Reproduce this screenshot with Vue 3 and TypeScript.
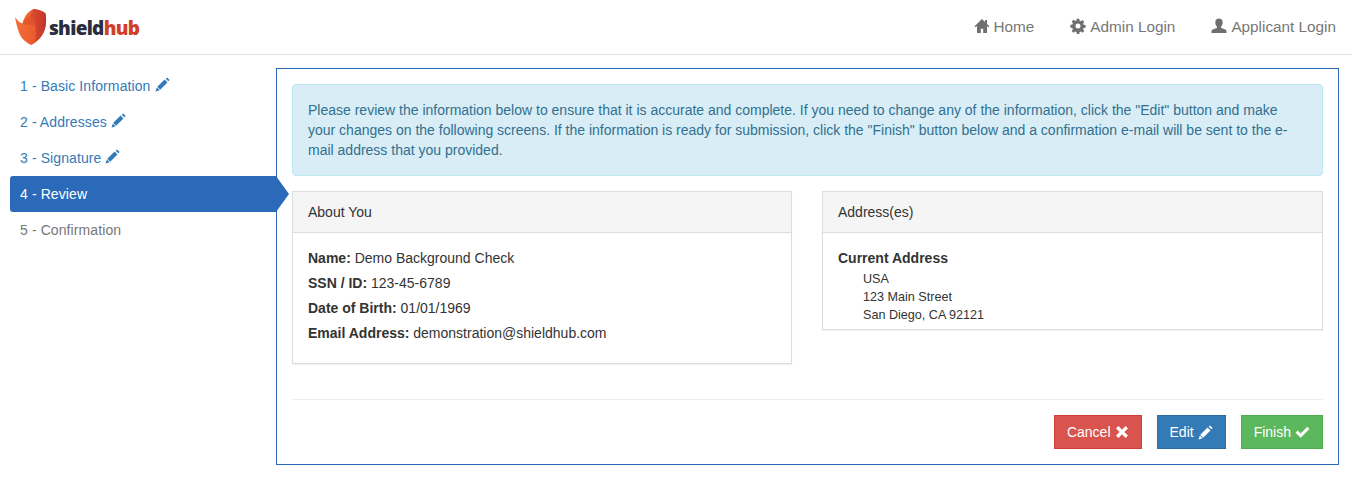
<template>
  <div class="page">
    <header class="topbar">
      <a class="brand">
        <svg class="brand-mark" viewBox="0 0 32 36" width="32" height="36">
          <defs>
            <linearGradient id="sh1" x1="0" y1="0" x2="1" y2="0.4">
              <stop offset="0" stop-color="#f4743a" />
              <stop offset="1" stop-color="#e8562b" />
            </linearGradient>
            <linearGradient id="sh2" x1="0" y1="0" x2="1" y2="0">
              <stop offset="0" stop-color="#dd5030" />
              <stop offset="1" stop-color="#c3332a" />
            </linearGradient>
          </defs>
          <path d="M0 8 C2 11 5 14 7.500 14.500 C9 8 13 2 18.500 0 C23 .5 28 2 30.500 4.500 C32 13 31 22 25 29 C22 32 19 35 16 36 C11 33.500 7 30 5 26 C2.500 20 1 14 0 8 Z" fill="url(#sh1)" />
          <path d="M18.500 0 C23 .5 28 2 30.500 4.500 C32 13 31 22 25 29 C23.500 30.500 22 32 20 33.500 C22 24 21 12 15 7 C16 4 17 2 18.500 0 Z" fill="url(#sh2)" />
          <path d="M7.500 14.500 C9.500 11 12 8.500 15 7 C18 10 19 13 19.500 16 C15 16.500 11 16 7.500 14.500 Z" fill="#d94a2a" opacity=".55" />
        </svg>
        <span class="brand-name">shield<span class="brand-hub">hub</span></span>
      </a>
      <nav class="topnav">
        <a v-for="link in navLinks" :key="link.label" class="topnav-link">
          <svg class="topnav-icon" viewBox="0 0 16 16" width="16" height="16"><path :d="link.icon" fill="currentColor" fill-rule="evenodd" /></svg>
          {{ link.label }}
        </a>
      </nav>
    </header>

    <main class="content">
      <ul class="steps">
        <li v-for="step in steps" :key="step.label" class="step" :class="step.state">
          {{ step.label }}
          <svg v-if="step.state === 'done'" class="pencil" viewBox="0 0 16 16" width="15" height="15"><path :d="pencil" fill="currentColor" /></svg>
        </li>
      </ul>

      <section class="review">
        <div class="alert">
          Please review the information below to ensure that it is accurate and complete. If you need to change any of the information, click the "Edit" button and make your changes on the following screens. If the information is ready for submission, click the "Finish" button below and a confirmation e-mail will be sent to the e-mail address that you provided.
        </div>

        <div class="cols">
          <div class="panel">
            <div class="panel-head">About You</div>
            <div class="panel-body about">
              <p v-for="row in aboutRows" :key="row.label"><b>{{ row.label }}:</b> {{ row.value }}</p>
            </div>
          </div>
          <div class="panel">
            <div class="panel-head">Address(es)</div>
            <div class="panel-body address">
              <b>Current Address</b>
              <div class="address-lines">
                <div>USA</div>
                <div>123 Main Street</div>
                <div>San Diego, CA 92121</div>
              </div>
            </div>
          </div>
        </div>

        <hr class="rule" />

        <div class="actions">
          <button class="btn cancel">Cancel
            <svg viewBox="0 0 16 16" width="14" height="14"><path d="M3.900 1.200 8 5.300l4.100-4.100 2.700 2.700L10.700 8l4.100 4.100-2.700 2.700L8 10.700l-4.100 4.100-2.700-2.700L5.300 8 1.200 3.900z" fill="currentColor" /></svg>
          </button>
          <button class="btn edit">Edit
            <svg viewBox="0 0 16 16" width="15" height="15"><path :d="pencil" fill="currentColor" /></svg>
          </button>
          <button class="btn finish">Finish
            <svg viewBox="0 0 16 16" width="15" height="15"><path d="M6 13.600.6 8.200l2.300-2.300L6 9l7.100-7.100 2.300 2.300z" fill="currentColor" /></svg>
          </button>
        </div>
      </section>
    </main>
  </div>
</template>

<script setup lang="ts">
const pencil = 'M12.800.4l2.800 2.800-1.400 1.400-2.800-2.800zM10.200 2.700l3.100 3.100-7.800 7.800-3.100-3.100zM2 11.100l3 3L.5 15.500z'

const navLinks = [
  { label: 'Home', icon: 'M8 1 .5 8.300l1 1L3 8v7h3.800v-4.200h2.400V15H13V8l1.500 1.300 1-1L13 5.900V2h-2v2z' },
  { label: 'Admin Login', icon: 'M6.700 .8h2.600l.3 2 1.200.5 1.700-1.200 1.800 1.800-1.200 1.700.5 1.200 2 .3v2.600l-2 .3-.5 1.200 1.200 1.700-1.800 1.800-1.700-1.200-1.200.5-.3 2H6.700l-.3-2-1.200-.5-1.700 1.200-1.800-1.800 1.200-1.700-.5-1.200-2-.3V6.700l2-.3.5-1.200-1.200-1.700 1.800-1.800 1.700 1.200 1.200-.5zM8 5.500a2.500 2.500 0 1 0 0 5 2.500 2.500 0 0 0 0-5z' },
  { label: 'Applicant Login', icon: 'M8 .5c2.300 0 3.700 1.600 3.700 4 0 1.700-.7 3.200-1.600 4.200v1.200c2 .8 5.400 1.300 5.400 3.300v1.800H.5V13.200c0-2 3.400-2.500 5.400-3.300V8.700c-.9-1-1.600-2.500-1.600-4.200 0-2.400 1.400-4 3.700-4z' },
]

const steps = [
  { label: '1 - Basic Information', state: 'done' },
  { label: '2 - Addresses', state: 'done' },
  { label: '3 - Signature', state: 'done' },
  { label: '4 - Review', state: 'active' },
  { label: '5 - Confirmation', state: 'todo' },
]

const aboutRows = [
  { label: 'Name', value: 'Demo Background Check' },
  { label: 'SSN / ID', value: '123-45-6789' },
  { label: 'Date of Birth', value: '01/01/1969' },
  { label: 'Email Address', value: 'demonstration@shieldhub.com' },
]
</script>

<style>
html, body { background: #fff; }
</style>

<style scoped>
.page { font-family: "Liberation Sans", Arial, sans-serif; font-size: 14px; line-height: 20px; color: #333; }

.topbar { height: 54px; border-bottom: 1px solid #e0e0e0; display: flex; align-items: center; justify-content: space-between; padding: 0 16px 0 15px; }
.brand { display: flex; align-items: center; gap: 2px; }
.brand-mark { display: block; }
.brand-name { font-family: "Open Sans", "Liberation Sans", sans-serif; font-weight: 800; font-size: 19px; letter-spacing: -0.7px; color: #2b2d3c; margin-top: 2px; }
.brand-hub { color: #d13f27; }
.topnav { display: flex; gap: 36px; margin-top: -1px; }
.topnav-link { font-size: 15.300px; color: #777; display: flex; align-items: center; gap: 4px; }
.topnav-icon { display: block; color: #6f6f6f; margin-top: -2px; }

.content { display: flex; align-items: flex-start; padding: 13px 13px 0 10px; }
.steps { list-style: none; margin: 0; padding: 0; width: 266px; flex: none; }
.step { height: 36px; padding: 0 10px; display: flex; align-items: center; gap: 4px; color: #337ab7; letter-spacing: .1px; }
.step.active { position: relative; z-index: 1; background: #2a6ab8; color: #fff; border-radius: 3px 0 0 3px; }
.step.active::after { content: ""; position: absolute; left: 100%; top: 0; border-style: solid; border-width: 18px 0 18px 13px; border-color: transparent transparent transparent #2a6ab8; }
.step.todo { color: #777; }
.pencil { display: block; margin-top: -3px; }

.review { flex: 1; border: 1px solid #2a6ab8; padding: 15px; height: 397px; box-sizing: border-box; }
.alert { background: #d9edf7; border: 1px solid #bce8f1; border-radius: 4px; color: #31708f; padding: 15px; height: 92px; box-sizing: border-box; }

.cols { display: grid; grid-template-columns: 500px 501px; gap: 30px; align-items: start; margin-top: 15px; }
.panel { border: 1px solid #ddd; box-shadow: 0 1px 1px rgba(0, 0, 0, .05); background: #fff; }
.panel-head { background: #f5f5f5; border-bottom: 1px solid #ddd; padding: 10px 15px; height: 41px; box-sizing: border-box; }
.panel-body { padding: 15px; }
.about { height: 130px; box-sizing: border-box; }
.about p { margin: 0 0 5px; }
.address { height: 96px; box-sizing: border-box; }
.address-lines { padding-left: 25px; font-size: 12.600px; line-height: 18px; margin-top: 2px; }

.rule { border: 0; border-top: 1px solid #eee; margin: 35px 0 15px; }
.actions { display: flex; justify-content: flex-end; gap: 15px; }
.btn { height: 34px; box-sizing: border-box; border: 1px solid; border-radius: 0; padding: 0 12px; font: inherit; color: #fff; display: flex; align-items: center; gap: 4px; }
.btn svg { display: block; }
.cancel { background: #d9534f; border-color: #d43f3a; }
.edit { background: #337ab7; border-color: #2e6da4; }
.finish { background: #5cb85c; border-color: #4cae4c; }
</style>
